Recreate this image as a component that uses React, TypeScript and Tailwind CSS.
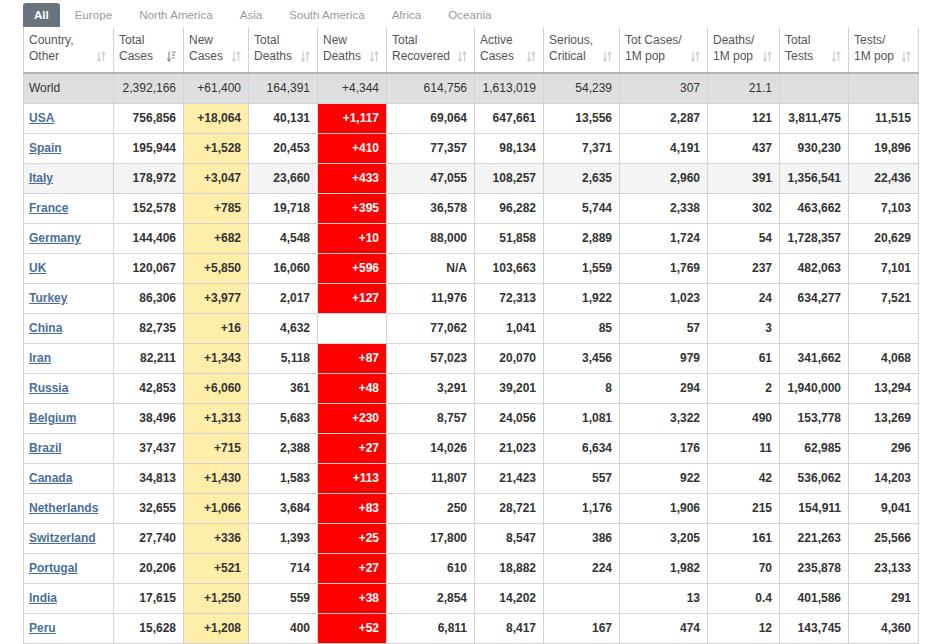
import React from "react";

const tabs = ["All", "Europe", "North America", "Asia", "South America", "Africa", "Oceania"];

const headers: [string, string][] = [
  ["Country,", "Other"],
  ["Total", "Cases"],
  ["New", "Cases"],
  ["Total", "Deaths"],
  ["New", "Deaths"],
  ["Total", "Recovered"],
  ["Active", "Cases"],
  ["Serious,", "Critical"],
  ["Tot Cases/", "1M pop"],
  ["Deaths/", "1M pop"],
  ["Total", "Tests"],
  ["Tests/", "1M pop"],
];

const colWidths = [90, 70, 65, 69, 69, 88, 69, 76, 88, 72, 69, 70];

// country, total, new, deaths, newDeaths, recovered, active, serious, casesPerM, deathsPerM, tests, testsPerM
const rows: string[][] = [
  ["USA", "756,856", "+18,064", "40,131", "+1,117", "69,064", "647,661", "13,556", "2,287", "121", "3,811,475", "11,515"],
  ["Spain", "195,944", "+1,528", "20,453", "+410", "77,357", "98,134", "7,371", "4,191", "437", "930,230", "19,896"],
  ["Italy", "178,972", "+3,047", "23,660", "+433", "47,055", "108,257", "2,635", "2,960", "391", "1,356,541", "22,436"],
  ["France", "152,578", "+785", "19,718", "+395", "36,578", "96,282", "5,744", "2,338", "302", "463,662", "7,103"],
  ["Germany", "144,406", "+682", "4,548", "+10", "88,000", "51,858", "2,889", "1,724", "54", "1,728,357", "20,629"],
  ["UK", "120,067", "+5,850", "16,060", "+596", "N/A", "103,663", "1,559", "1,769", "237", "482,063", "7,101"],
  ["Turkey", "86,306", "+3,977", "2,017", "+127", "11,976", "72,313", "1,922", "1,023", "24", "634,277", "7,521"],
  ["China", "82,735", "+16", "4,632", "", "77,062", "1,041", "85", "57", "3", "", ""],
  ["Iran", "82,211", "+1,343", "5,118", "+87", "57,023", "20,070", "3,456", "979", "61", "341,662", "4,068"],
  ["Russia", "42,853", "+6,060", "361", "+48", "3,291", "39,201", "8", "294", "2", "1,940,000", "13,294"],
  ["Belgium", "38,496", "+1,313", "5,683", "+230", "8,757", "24,056", "1,081", "3,322", "490", "153,778", "13,269"],
  ["Brazil", "37,437", "+715", "2,388", "+27", "14,026", "21,023", "6,634", "176", "11", "62,985", "296"],
  ["Canada", "34,813", "+1,430", "1,583", "+113", "11,807", "21,423", "557", "922", "42", "536,062", "14,203"],
  ["Netherlands", "32,655", "+1,066", "3,684", "+83", "250", "28,721", "1,176", "1,906", "215", "154,911", "9,041"],
  ["Switzerland", "27,740", "+336", "1,393", "+25", "17,800", "8,547", "386", "3,205", "161", "221,263", "25,566"],
  ["Portugal", "20,206", "+521", "714", "+27", "610", "18,882", "224", "1,982", "70", "235,878", "23,133"],
  ["India", "17,615", "+1,250", "559", "+38", "2,854", "14,202", "", "13", "0.4", "401,586", "291"],
  ["Peru", "15,628", "+1,208", "400", "+52", "6,811", "8,417", "167", "474", "12", "143,745", "4,360"],
];

const world = ["World", "2,392,166", "+61,400", "164,391", "+4,344", "614,756", "1,613,019", "54,239", "307", "21.1", "", ""];

const SortIcon = ({ active }: { active?: boolean }) => (
  <svg width="9" height="11" viewBox="0 0 9 11" className="shrink-0 mb-[2px]">
    <g stroke={active ? "#a0a0a0" : "#d2d2d2"} strokeWidth="1.4" fill="none">
      <path d="M2 0.5v9.5M0.3 7.6L2 10.2l1.7-2.6" />
      {active ? (
        <path d="M5 1.2h3.5M5 4h3M5 6.8h2.2" />
      ) : (
        <path d="M6.5 10.5V1M4.8 3.4L6.5 0.8l1.7 2.6" />
      )}
    </g>
  </svg>
);

export default function App() {
  return (
    <div className="min-h-[644px] bg-white pl-[23px] font-['Liberation_Sans',Arial,sans-serif] text-[12px] text-[#333]">
      <div className="flex h-[27px] items-end gap-[3px] text-[11.6px]">
        {tabs.map((t, i) =>
          i === 0 ? (
            <div
              key={t}
              className="flex h-[24px] items-center rounded-t-[3px] bg-[#68737e] px-[11px] font-bold text-white"
            >
              {t}
            </div>
          ) : (
            <div key={t} className="flex h-[24px] items-center px-[12px] text-[#9a9a9a]">
              {t}
            </div>
          )
        )}
      </div>
      <table className="w-[895px] table-fixed border-collapse">
        <colgroup>
          {colWidths.map((w, i) => (
            <col key={i} style={{ width: w }} />
          ))}
        </colgroup>
        <thead>
          <tr>
            {headers.map(([a, b], i) => (
              <th
                key={i}
                className="h-[46px] border-x border-b-2 border-x-[#d3d3d3] border-b-[#b4b4b4] px-0 align-top font-normal text-[#555]"
              >
                <div className="flex items-end justify-between pl-[5px] pr-[7px] pt-[5px] text-left leading-[16px]">
                  <div>
                    <div>{a}</div>
                    <div>{b}</div>
                  </div>
                  <SortIcon active={i === 1} />
                </div>
              </th>
            ))}
          </tr>
        </thead>
        <tbody>
          <tr className="h-[30px] bg-[#dfdfdf]">
            {world.map((v, i) => (
              <td
                key={i}
                className={`border border-[#d3d3d3] ${i === 0 ? "pl-[5px] text-left" : "pr-[7px] text-right"}`}
              >
                {v}
              </td>
            ))}
          </tr>
          {rows.map((r) => (
            <tr key={r[0]} className={`h-[30px] font-bold ${r[0] === "Italy" ? "bg-[#f4f4f4]" : "bg-white"}`}>
              {r.map((v, i) => {
                if (i === 0)
                  return (
                    <td key={i} className="border border-[#d3d3d3] pl-[5px] text-left">
                      <a href="#" className="text-[#4a6f99] underline">
                        {v}
                      </a>
                    </td>
                  );
                let cls = "border border-[#d3d3d3] pr-[7px] text-right";
                if (i === 2) cls += " bg-[#ffeeaa]";
                if (i === 4 && v) cls += " bg-[#ff0000] text-white";
                return (
                  <td key={i} className={cls}>
                    {v}
                  </td>
                );
              })}
            </tr>
          ))}
        </tbody>
      </table>
    </div>
  );
}
